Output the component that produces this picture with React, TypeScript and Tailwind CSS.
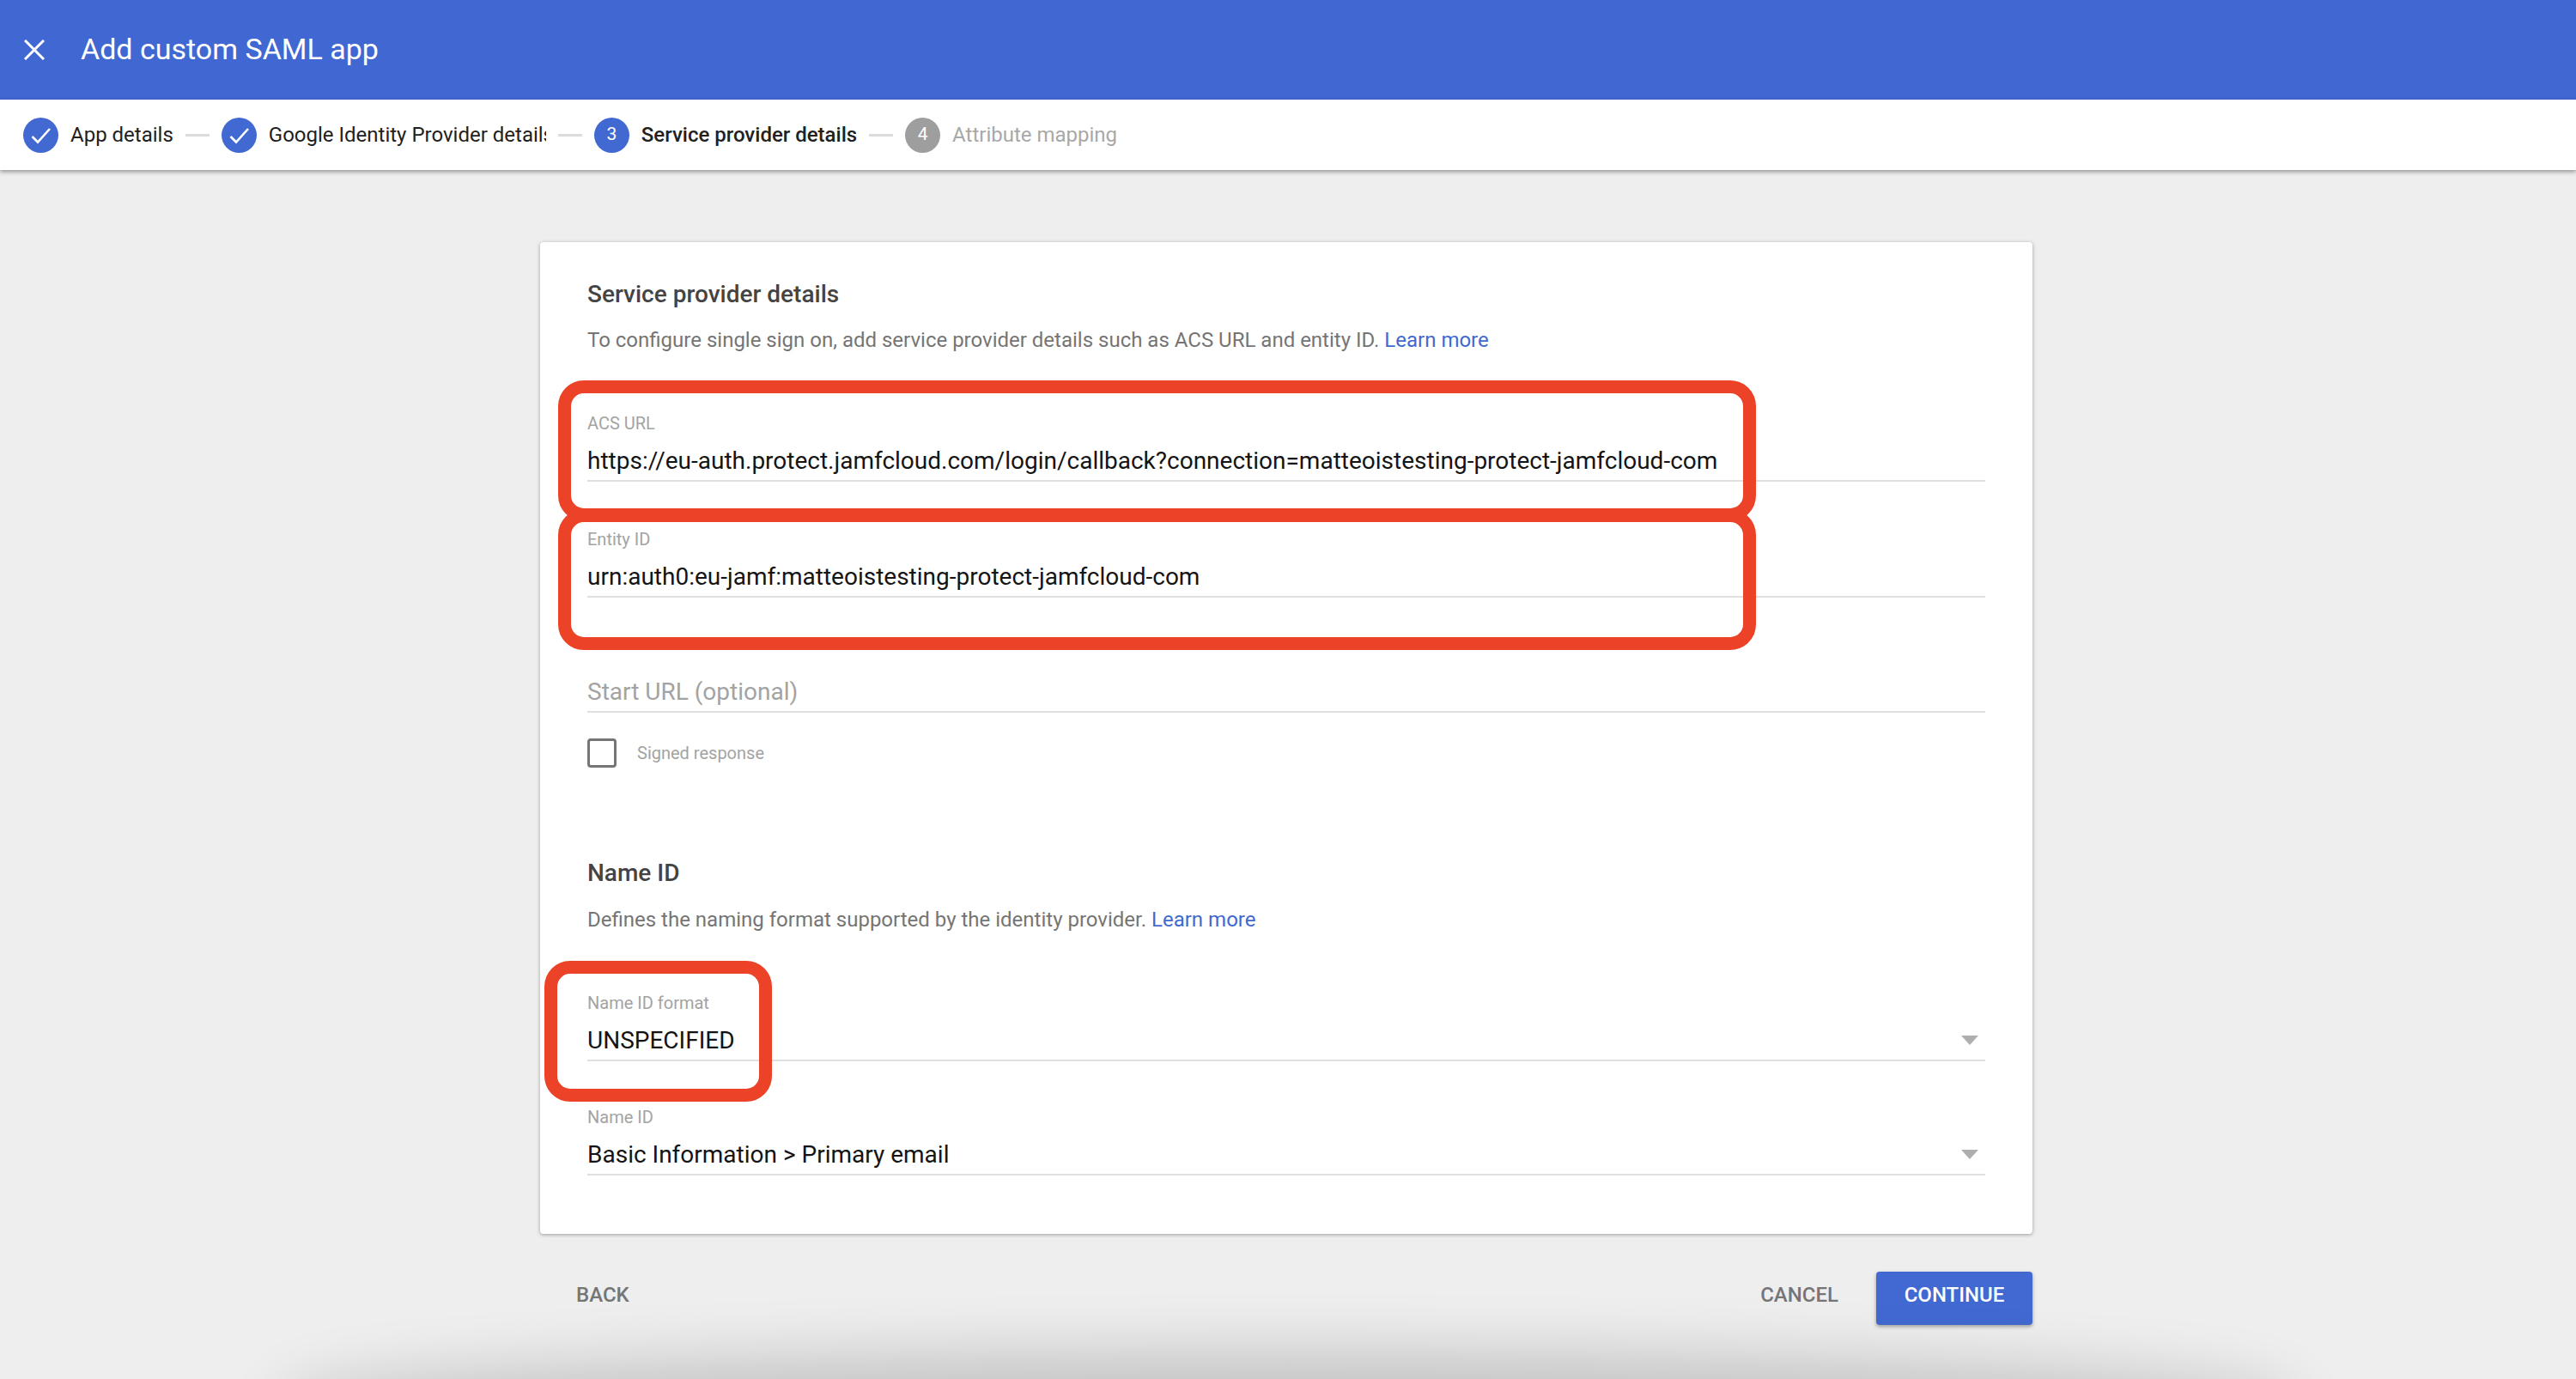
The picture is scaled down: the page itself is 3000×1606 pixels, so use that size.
import { ReactNode } from 'react';

const FONT = "font-['Roboto',sans-serif]";

function CheckIcon() {
  return (
    <svg viewBox="0 0 41 41" className="w-[41px] h-[41px]" fill="none">
      <path d="M10.5 22l6.5 6.5L31 13" stroke="#fff" strokeWidth="2.6" />
    </svg>
  );
}

function Step({
  marker,
  label,
  gray,
  bold,
  textClass,
}: {
  marker: ReactNode;
  label: string;
  gray?: boolean;
  bold?: boolean;
  textClass?: string;
}) {
  return (
    <div className="flex items-center gap-[14px]">
      <div
        className={`w-[41px] h-[41px] rounded-full flex items-center justify-center text-white text-[21px] ${
          gray ? 'bg-[#9e9e9e]' : 'bg-[#4169d1]'
        }`}
      >
        {marker}
      </div>
      <div
        className={`text-[24px] leading-[32px] whitespace-nowrap ${bold ? 'font-medium' : ''} ${
          gray ? 'text-[#a8a8a8]' : 'text-[#212121]'
        } ${textClass ?? ''}`}
      >
        {label}
      </div>
    </div>
  );
}

function Dash() {
  return <div className="w-[28px] h-[3px] bg-[#dcdcdc] mx-[14px]" />;
}

function Field({
  label,
  value,
  placeholder,
  select,
  className,
}: {
  label?: string;
  value?: string;
  placeholder?: string;
  select?: boolean;
  className?: string;
}) {
  return (
    <div className={`flex flex-col justify-end ${className ?? ''}`}>
      {label && <div className="text-[20px] leading-[24px] text-[#a3a3a3] mb-[14px]">{label}</div>}
      <div className="flex items-center justify-between border-b-2 border-[#e0e0e0] h-[42px] pb-[4px]">
        <span className={`text-[28px] leading-[36px] whitespace-nowrap ${placeholder ? 'text-[#a3a3a3]' : 'text-[#141414]'}`}>
          {value ?? placeholder}
        </span>
        {select && (
          <svg viewBox="0 0 20 11" className="w-[20px] h-[11px] mr-[8px] mb-[2px]">
            <path d="M0 0h20L10 11z" fill="#aeaeae" />
          </svg>
        )}
      </div>
    </div>
  );
}

export default function App() {
  return (
    <div className={`relative w-[3000px] h-[1606px] overflow-hidden bg-[#eeeeee] ${FONT}`}>
      {/* Header */}
      <div className="h-[116px] bg-[#4168d2] flex items-center pl-[28px]">
        <svg viewBox="0 0 24 24" className="w-[24px] h-[24px]" fill="none">
          <path d="M1 1l22 22M23 1L1 23" stroke="#fff" strokeWidth="3" />
        </svg>
        <div className="ml-[42px] text-[34px] text-white leading-[44px] mb-[2px]">Add custom SAML app</div>
      </div>

      {/* Stepper */}
      <div className="relative h-[82px] bg-white flex items-center pl-[27px] shadow-[0_2px_5px_rgba(0,0,0,0.4)]">
        <Step marker={<CheckIcon />} label="App details" />
        <Dash />
        <Step marker={<CheckIcon />} label="Google Identity Provider details" textClass="w-[323px] overflow-hidden" />
        <Dash />
        <Step marker="3" label="Service provider details" bold />
        <Dash />
        <Step marker="4" label="Attribute mapping" gray />
      </div>

      {/* Card */}
      <div className="relative ml-[629px] mt-[84px] w-[1738px] h-[1155px] bg-white rounded-[4px] pl-[55px] pr-[55px] shadow-[0_1px_4px_rgba(0,0,0,0.35)]">
        <div className="pt-[43px] text-[28px] leading-[36px] font-medium text-[#444444]">Service provider details</div>
        <div className="mt-[17px] text-[24px] leading-[36px] text-[#757575]">
          To configure single sign on, add service provider details such as ACS URL and entity ID.{' '}
          <span className="text-[#4169d1]">Learn more</span>
        </div>

        <Field className="mt-[16px] h-[131px]" label="ACS URL" value="https://eu-auth.protect.jamfcloud.com/login/callback?connection=matteoistesting-protect-jamfcloud-com" />
        <Field className="h-[135px]" label="Entity ID" value="urn:auth0:eu-jamf:matteoistesting-protect-jamfcloud-com" />
        <Field className="h-[134px]" placeholder="Start URL (optional)" />

        <div className="mt-[30px] flex items-center">
          <div className="w-[34px] h-[34px] rounded-[4px] border-[3px] border-[#757575]" />
          <span className="ml-[24px] text-[20px] text-[#a3a3a3]">Signed response</span>
        </div>

        <div className="mt-[105px] text-[28px] leading-[36px] font-medium text-[#444444]">Name ID</div>
        <div className="mt-[18px] text-[24px] leading-[36px] text-[#757575]">
          Defines the naming format supported by the identity provider.{' '}
          <span className="text-[#4169d1]">Learn more</span>
        </div>

        <Field className="h-[147px]" label="Name ID format" value="UNSPECIFIED" select />
        <Field className="h-[133px]" label="Name ID" value="Basic Information > Primary email" select />

        {/* Red annotation boxes */}
        <div className="absolute left-[21px] top-[161px] w-[1395px] h-[164px] rounded-[30px] border-[15px] border-[#ec4227]" />
        <div className="absolute left-[21px] top-[311px] w-[1395px] h-[164px] rounded-[30px] border-[15px] border-[#ec4227]" />
        <div className="absolute left-[5px] top-[837px] w-[265px] h-[164px] rounded-[30px] border-[15px] border-[#ec4227]" />
      </div>

      {/* Footer buttons */}
      <div className="ml-[629px] mt-[44px] w-[1738px] flex items-center justify-between">
        <div className="ml-[42px] mb-[8px] text-[24px] font-medium text-[#757575]">BACK</div>
        <div className="flex items-center">
          <div className="mb-[8px] text-[24px] font-medium text-[#757575] mr-[44px]">CANCEL</div>
          <div className="w-[182px] h-[62px] pb-[8px] rounded-[4px] bg-[#4169d1] flex items-center justify-center text-[24px] font-medium text-white shadow-[0_2px_4px_rgba(0,0,0,0.35)]">
            CONTINUE
          </div>
        </div>
      </div>

      {/* Blurred shadow at page bottom */}
      <div className="absolute left-[380px] w-[2240px] top-[1625px] h-[40px] rounded-[50%] shadow-[0_0_70px_50px_rgba(0,0,0,0.18)] bg-[#bbbbbb]" />
    </div>
  );
}
